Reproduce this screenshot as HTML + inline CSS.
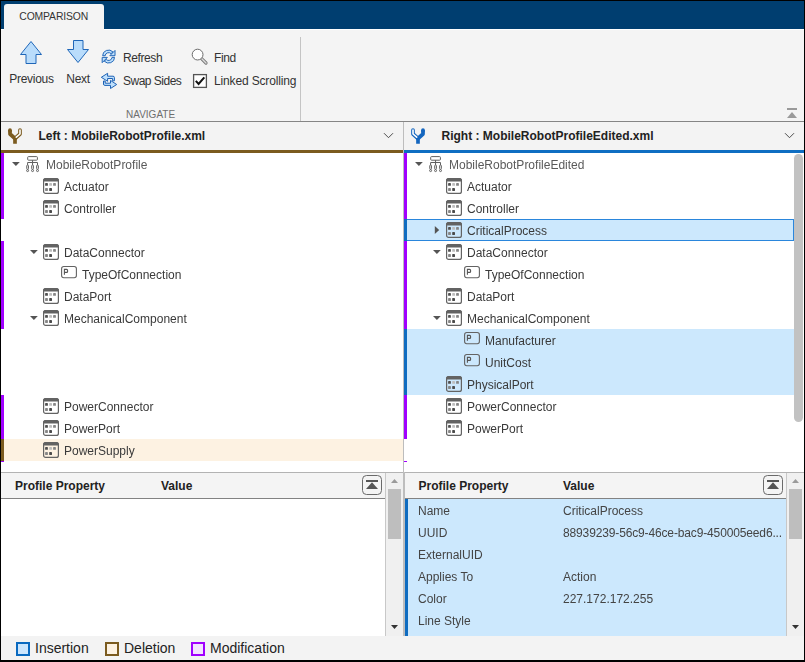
<!DOCTYPE html>
<html><head><meta charset="utf-8">
<style>
html,body{margin:0;padding:0;}
body{width:805px;height:662px;position:relative;overflow:hidden;background:#000;font-family:"Liberation Sans",sans-serif;}
.a{position:absolute;}
.t{position:absolute;white-space:nowrap;font-size:12px;line-height:22px;height:22px;color:#333;}
.g{will-change:transform;}
.tb{position:absolute;white-space:nowrap;font-size:12px;line-height:14px;height:14px;color:#333;}
svg.ov{position:absolute;left:0;top:0;}
</style></head><body>
<div class="a" style="left:1px;top:1px;width:803px;height:659px;background:#fff;"></div>
<div class="a" style="left:1px;top:1px;width:803px;height:28px;background:#003e70;"></div>
<div class="a" style="left:1px;top:29px;width:803px;height:1px;background:#fff;"></div>
<div class="a" style="left:1px;top:30px;width:803px;height:91px;background:#f4f4f4;"></div>
<div class="a" style="left:4px;top:4px;width:100px;height:26px;background:#f4f4f4;border-radius:3px 3px 0 0;"></div>
<div class="a" style="left:1px;top:121px;width:803px;height:1px;background:#858585;"></div>
<div class="a" style="left:300px;top:37px;width:1px;height:84px;background:#c4c4c4;"></div>
<div class="a" style="left:1px;top:122px;width:402px;height:28px;background:#f3f3f3;"></div>
<div class="a" style="left:404px;top:122px;width:400px;height:28px;background:#f3f3f3;"></div>
<div class="a" style="left:403px;top:122px;width:1px;height:350px;background:#bdbdbd;"></div>
<div class="a" style="left:1px;top:150px;width:402px;height:3px;background:#7b5b1f;"></div>
<div class="a" style="left:404px;top:150px;width:400px;height:3px;background:#0e6ec2;"></div>
<div class="a" style="left:1px;top:153px;width:3px;height:66px;background:#a000ff;"></div>
<div class="a" style="left:1px;top:241px;width:3px;height:88px;background:#a000ff;"></div>
<div class="a" style="left:1px;top:395px;width:3px;height:44px;background:#a000ff;"></div>
<div class="a" style="left:4px;top:439px;width:399px;height:22px;background:#fdf2e2;"></div>
<div class="a" style="left:1px;top:439px;width:3px;height:22px;background:#7b5b1f;"></div>
<div class="a" style="left:1px;top:461px;width:3px;height:1px;background:#a000ff;"></div>
<div class="a" style="left:404px;top:153px;width:3px;height:66px;background:#a000ff;"></div>
<div class="a" style="left:404px;top:241px;width:3px;height:88px;background:#a000ff;"></div>
<div class="a" style="left:404px;top:395px;width:3px;height:44px;background:#a000ff;"></div>
<div class="a" style="left:404px;top:219px;width:390px;height:22px;background:#cce8fd;box-sizing:border-box;border:1px solid #2a86dc;"></div>
<div class="a" style="left:404px;top:219px;width:3px;height:22px;background:#0f6cc0;"></div>
<div class="a" style="left:407px;top:329px;width:387px;height:66px;background:#cce8fd;"></div>
<div class="a" style="left:404px;top:329px;width:3px;height:66px;background:#0f6cc0;"></div>
<div class="a" style="left:404px;top:461px;width:3px;height:1px;background:#a000ff;"></div>
<div class="a" style="left:794px;top:154px;width:9px;height:268px;background:#c2c2c2;border-radius:4.5px;"></div>
<div class="t g" style="left:46px;top:154px;color:#5a5a5a">MobileRobotProfile</div>
<div class="t g" style="left:64px;top:176px;color:#3a3a3a">Actuator</div>
<div class="t g" style="left:64px;top:198px;color:#3a3a3a">Controller</div>
<div class="t g" style="left:64px;top:242px;color:#3a3a3a">DataConnector</div>
<div class="t g" style="left:82px;top:264px;color:#3a3a3a">TypeOfConnection</div>
<div class="t g" style="left:64px;top:286px;color:#3a3a3a">DataPort</div>
<div class="t g" style="left:64px;top:308px;color:#3a3a3a">MechanicalComponent</div>
<div class="t g" style="left:64px;top:396px;color:#3a3a3a">PowerConnector</div>
<div class="t g" style="left:64px;top:418px;color:#3a3a3a">PowerPort</div>
<div class="t g" style="left:64px;top:440px;color:#3a3a3a">PowerSupply</div>
<div class="t g" style="left:449px;top:154px;color:#5a5a5a">MobileRobotProfileEdited</div>
<div class="t g" style="left:467px;top:176px;color:#3a3a3a">Actuator</div>
<div class="t g" style="left:467px;top:198px;color:#3a3a3a">Controller</div>
<div class="t g" style="left:467px;top:220px;color:#3a3a3a">CriticalProcess</div>
<div class="t g" style="left:467px;top:242px;color:#3a3a3a">DataConnector</div>
<div class="t g" style="left:485px;top:264px;color:#3a3a3a">TypeOfConnection</div>
<div class="t g" style="left:467px;top:286px;color:#3a3a3a">DataPort</div>
<div class="t g" style="left:467px;top:308px;color:#3a3a3a">MechanicalComponent</div>
<div class="t g" style="left:485px;top:330px;color:#3a3a3a">Manufacturer</div>
<div class="t g" style="left:485px;top:352px;color:#3a3a3a">UnitCost</div>
<div class="t g" style="left:467px;top:374px;color:#3a3a3a">PhysicalPort</div>
<div class="t g" style="left:467px;top:396px;color:#3a3a3a">PowerConnector</div>
<div class="t g" style="left:467px;top:418px;color:#3a3a3a">PowerPort</div>
<div class="a" style="left:1px;top:472px;width:803px;height:1px;background:#b3b3b3;"></div>
<div class="a" style="left:1px;top:473px;width:384px;height:25px;background:#f4f4f4;"></div>
<div class="a" style="left:405px;top:473px;width:381px;height:25px;background:#f4f4f4;"></div>
<div class="a" style="left:1px;top:498px;width:384px;height:1px;background:#828282;"></div>
<div class="a" style="left:405px;top:498px;width:381px;height:1px;background:#828282;"></div>
<div class="a" style="left:403px;top:472px;width:2px;height:164px;background:#bdbdbd;"></div>
<div class="a" style="left:385px;top:473px;width:1px;height:163px;background:#c8c8c8;"></div>
<div class="a" style="left:386px;top:473px;width:17px;height:163px;background:#f0f0f0;"></div>
<div class="a" style="left:388px;top:489px;width:13px;height:50px;background:#bebebe;"></div>
<div class="a" style="left:786px;top:473px;width:1px;height:163px;background:#c8c8c8;"></div>
<div class="a" style="left:787px;top:473px;width:17px;height:163px;background:#f0f0f0;"></div>
<div class="a" style="left:789px;top:489px;width:13px;height:50px;background:#bebebe;"></div>
<div class="a" style="left:405px;top:499px;width:381px;height:137px;background:#cce8fd;"></div>
<div class="a" style="left:405px;top:499px;width:3px;height:137px;background:#0f6cc0;"></div>
<div class="t" style="left:15px;top:474px;font-weight:bold;color:#222;height:25px;line-height:25px">Profile Property</div>
<div class="t" style="left:161px;top:474px;font-weight:bold;color:#222;height:25px;line-height:25px">Value</div>
<div class="t" style="left:418.5px;top:474px;font-weight:bold;color:#222;height:25px;line-height:25px">Profile Property</div>
<div class="t" style="left:563px;top:474px;font-weight:bold;color:#222;height:25px;line-height:25px">Value</div>
<div class="t g" style="left:418px;top:500px;color:#444">Name</div>
<div class="t g" style="left:563px;top:500px;color:#444">CriticalProcess</div>
<div class="t g" style="left:418px;top:522px;color:#444">UUID</div>
<div class="t g" style="left:563px;top:522px;color:#444;letter-spacing:-0.14px">88939239-56c9-46ce-bac9-450005eed6...</div>
<div class="t g" style="left:418px;top:544px;color:#444">ExternalUID</div>
<div class="t g" style="left:418px;top:566px;color:#444">Applies To</div>
<div class="t g" style="left:563px;top:566px;color:#444">Action</div>
<div class="t g" style="left:418px;top:588px;color:#444">Color</div>
<div class="t g" style="left:563px;top:588px;color:#444">227.172.172.255</div>
<div class="t g" style="left:418px;top:610px;color:#444">Line Style</div>
<div class="a" style="left:1px;top:636px;width:803px;height:24px;background:#f3f3f3;"></div>
<div class="a" style="left:16px;top:642px;width:14px;height:14px;background:#cce6fd;box-sizing:border-box;border:2px solid #0a6ac0;"></div>
<div class="a" style="left:105px;top:642px;width:14px;height:14px;background:#fdf2e2;box-sizing:border-box;border:2px solid #7b5b1f;"></div>
<div class="a" style="left:191px;top:642px;width:14px;height:14px;background:#f3e3ff;box-sizing:border-box;border:2px solid #a000ff;"></div>
<div class="t" style="left:35px;top:636px;font-size:14px;color:#222;line-height:24px;height:24px">Insertion</div>
<div class="t" style="left:124px;top:636px;font-size:14px;color:#222;line-height:24px;height:24px">Deletion</div>
<div class="t" style="left:210px;top:636px;font-size:14px;color:#222;line-height:24px;height:24px">Modification</div>
<div class="t" style="left:19.3px;top:4px;font-size:10.4px;letter-spacing:-0.15px;color:#333;line-height:26px;height:26px">COMPARISON</div>
<div class="tb" style="left:9.3px;top:72px;letter-spacing:-0.3px">Previous</div>
<div class="tb" style="left:66.3px;top:72px;letter-spacing:-0.3px">Next</div>
<div class="tb" style="left:123px;top:51px;letter-spacing:-0.4px">Refresh</div>
<div class="tb" style="left:123px;top:74px;letter-spacing:-0.5px">Swap Sides</div>
<div class="tb" style="left:214px;top:51px;letter-spacing:-0.4px">Find</div>
<div class="tb" style="left:214px;top:74px;letter-spacing:-0.15px">Linked Scrolling</div>
<div class="tb" style="left:126px;top:108px;font-size:10px;color:#6e6e6e">NAVIGATE</div>
<div class="t" style="left:38.5px;top:122px;font-weight:bold;color:#222;height:28px;line-height:28px">Left : MobileRobotProfile.xml</div>
<div class="t" style="left:441.5px;top:122px;font-weight:bold;color:#222;height:28px;line-height:28px">Right : MobileRobotProfileEdited.xml</div>
<svg class="ov" width="805" height="662" viewBox="0 0 805 662"><defs>
<symbol id="cls" width="16" height="16" viewBox="0 0 16 16" overflow="visible">
 <rect x="0.6" y="0.6" width="14.8" height="14.8" rx="2" fill="none" stroke="#636363" stroke-width="1.2"/>
 <path d="M0.6 3V2.6A2 2 0 0 1 2.6 0.6H13.4A2 2 0 0 1 15.4 2.6V3Z" fill="#636363" stroke="#636363" stroke-width="1.2"/>
 <rect x="2.1" y="5" width="2.8" height="2.8" rx="0.4" fill="#505050"/>
 <rect x="6.2" y="5" width="2.8" height="2.8" rx="0.4" fill="#bdbdbd"/>
 <rect x="10.1" y="5" width="2.8" height="2.8" rx="0.4" fill="#858585"/>
 <rect x="2.1" y="10.1" width="2.8" height="2.8" rx="0.4" fill="#858585"/>
 <rect x="6.2" y="10.1" width="2.8" height="2.8" rx="0.4" fill="#4a4a4a"/>
</symbol>
<symbol id="prop" width="16" height="12" viewBox="0 0 16 12" overflow="visible">
 <rect x="0.6" y="0.5" width="14.8" height="11.2" rx="2.2" fill="none" stroke="#636363" stroke-width="1.1"/>
 <path d="M3.4 8.7V3.4H5.6Q6.6 3.4 6.6 4.4V5.4Q6.6 6.4 5.6 6.4H3.4" fill="none" stroke="#555" stroke-width="1.1"/>
</symbol>
<symbol id="hier" width="13" height="16" viewBox="0 0 13 16" overflow="visible">
 <g fill="none" stroke="#606060" stroke-width="1">
 <rect x="1.7" y="0.6" width="9.7" height="3.6" rx="0.8"/>
 <path d="M6.55 4.2V6.5M1.6 9V6.5H11.5V9M6.55 6.5V9"/>
 <rect x="0.75" y="9" width="1.7" height="4.4" rx="0.85"/>
 <rect x="5.7" y="9" width="1.7" height="4.4" rx="0.85"/>
 <rect x="10.65" y="9" width="1.7" height="4.4" rx="0.85"/>
 <circle cx="1.6" cy="14.6" r="1"/><circle cx="6.55" cy="14.6" r="1"/><circle cx="11.5" cy="14.6" r="1"/>
 </g>
</symbol>
<symbol id="coll" width="20" height="20" viewBox="0 0 20 20" overflow="visible">
 <rect x="0.5" y="0.5" width="19" height="19" rx="4" fill="none" stroke="#6a6a6a" stroke-width="1"/>
 <rect x="4" y="5" width="12" height="2" fill="#555"/>
 <path d="M4 14H16L10 7.3Z" fill="#555"/>
</symbol>
<symbol id="refresh" width="18" height="18" viewBox="0 0 18 18" overflow="visible">
 <g transform="translate(8.6 8.55) scale(0.88) translate(-8.6 -8.55)"><g id="rfh" fill="#bfe0fc" stroke="#1d62b5" stroke-width="1.1" stroke-linejoin="miter">
 <path d="M1.85 7.60A6.7 6.4 0 0 1 13.53 3.32L11.37 5.26A3.8 3.5 0 0 0 4.75 7.60Z"/>
 <path d="M15.9 1.6V7.6H10Z"/>
 </g>
 <use href="#rfh" transform="rotate(180 8.6 8.55)"/></g>
</symbol>
<symbol id="swap" width="18" height="18" viewBox="0 0 18 18" overflow="visible">
 <path d="M1.3 5.3L7.6 1.3V4.2H13A1.4 1.4 0 0 1 14.4 5.6V8.8H12.6V6.5H7.6V9.3Z" fill="#bfe0fc" stroke="#1d62b5" stroke-width="1" stroke-linejoin="round"/>
 <path d="M16.7 12.5L10.5 16.5V13.4H4.9A1.4 1.4 0 0 1 3.5 12V9H5.2V11.2H10.5V8.4Z" fill="#bfe0fc" stroke="#1d62b5" stroke-width="1" stroke-linejoin="round"/>
</symbol>
<symbol id="forkL" width="805" height="662" overflow="visible"><g fill="none" stroke-linejoin="round">
 <path d="M20 130V134L15 138.5" stroke="#7b5b1f" stroke-width="3.7" stroke-linecap="round"/>
 <path d="M10 130V134L15 138.5V143.8" stroke="#7b5b1f" stroke-width="3.7" stroke-linecap="butt"/>
 <path d="M10 130V131" stroke="#7b5b1f" stroke-width="3.7" stroke-linecap="round"/>
 <path d="M20 130V134L16.3 137.2" stroke="#fff" stroke-width="1.6" stroke-linecap="round"/>
</g></symbol>
<symbol id="forkR" width="805" height="662" overflow="visible"><g fill="none" stroke-linejoin="round">
 <path d="M413 130V134L418 138.5" stroke="#1466bf" stroke-width="3.7" stroke-linecap="round"/>
 <path d="M423 130V134L418 138.5V143.8" stroke="#1466bf" stroke-width="3.7" stroke-linecap="butt"/>
 <path d="M423 130V131" stroke="#1466bf" stroke-width="3.7" stroke-linecap="round"/>
 <path d="M413 130V134L416.7 137.2" stroke="#fff" stroke-width="1.6" stroke-linecap="round"/>
</g></symbol>
</defs>
<use href="#hier" x="26" y="156"/>
<path d="M12 162h7.8l-3.9 4z" fill="#555"/>
<use href="#cls" x="43" y="178"/>
<use href="#cls" x="43" y="200"/>
<use href="#cls" x="43" y="244"/>
<path d="M30 250h7.8l-3.9 4z" fill="#555"/>
<use href="#prop" x="61" y="266"/>
<use href="#cls" x="43" y="288"/>
<use href="#cls" x="43" y="310"/>
<path d="M30 316h7.8l-3.9 4z" fill="#555"/>
<use href="#cls" x="43" y="398"/>
<use href="#cls" x="43" y="420"/>
<use href="#cls" x="43" y="442"/>
<use href="#hier" x="429" y="156"/>
<path d="M415 162h7.8l-3.9 4z" fill="#555"/>
<use href="#cls" x="446" y="178"/>
<use href="#cls" x="446" y="200"/>
<use href="#cls" x="446" y="222"/>
<path d="M434.8 226v8l4.4-4z" fill="#555"/>
<use href="#cls" x="446" y="244"/>
<path d="M433 250h7.8l-3.9 4z" fill="#555"/>
<use href="#prop" x="464" y="266"/>
<use href="#cls" x="446" y="288"/>
<use href="#cls" x="446" y="310"/>
<path d="M433 316h7.8l-3.9 4z" fill="#555"/>
<use href="#prop" x="464" y="332"/>
<use href="#prop" x="464" y="354"/>
<use href="#cls" x="446" y="376"/>
<use href="#cls" x="446" y="398"/>
<use href="#cls" x="446" y="420"/>
<use href="#coll" x="362" y="475"/>
<use href="#coll" x="763" y="475"/>
<path d="M391 483h7l-3.5-4z" fill="#9a9a9a"/>
<path d="M391 625h7l-3.5 4z" fill="#333"/>
<path d="M792 483h7l-3.5-4z" fill="#9a9a9a"/>
<path d="M792 625h7l-3.5 4z" fill="#333"/>
<path d="M31 41.5L41.5 54.5H36V63.5H26V54.5H20.5Z" fill="#b9dcfb" stroke="#1f66b8" stroke-width="1"/>
<path d="M73.5 40.5H83V49.5H88.5L78 62.5L67.5 49.5H73.5Z" fill="#b9dcfb" stroke="#1f66b8" stroke-width="1"/>
<use href="#refresh" x="100" y="48"/>
<use href="#swap" x="100" y="72"/>
<path d="M201.8 58.8L206 63" stroke="#777" stroke-width="3.2" stroke-linecap="round"/><path d="M201.8 58.8L206 63" stroke="#ddd" stroke-width="1.4" stroke-linecap="round"/>
<circle cx="197.6" cy="54.6" r="5.4" fill="#fff" stroke="#6a6a6a" stroke-width="1"/>
<rect x="193.6" y="74.6" width="12.8" height="12.8" fill="#fff" stroke="#555" stroke-width="1.3"/>
<path d="M195.8 80.8L198.6 84L204.3 77.3" fill="none" stroke="#111" stroke-width="2"/>
<rect x="787" y="108" width="10" height="2" fill="#9a9a9a"/><path d="M787 118h10l-5-6z" fill="#9a9a9a"/>
<use href="#forkL" x="0" y="0"/>
<use href="#forkR" x="0" y="0"/>
<path d="M384 133.2L388.5 137.7L393 133.2" fill="none" stroke="#3a3a3a" stroke-width="0.9"/>
<path d="M785 133.2L789.5 137.7L794 133.2" fill="none" stroke="#3a3a3a" stroke-width="0.9"/>
</svg>
</body></html>
